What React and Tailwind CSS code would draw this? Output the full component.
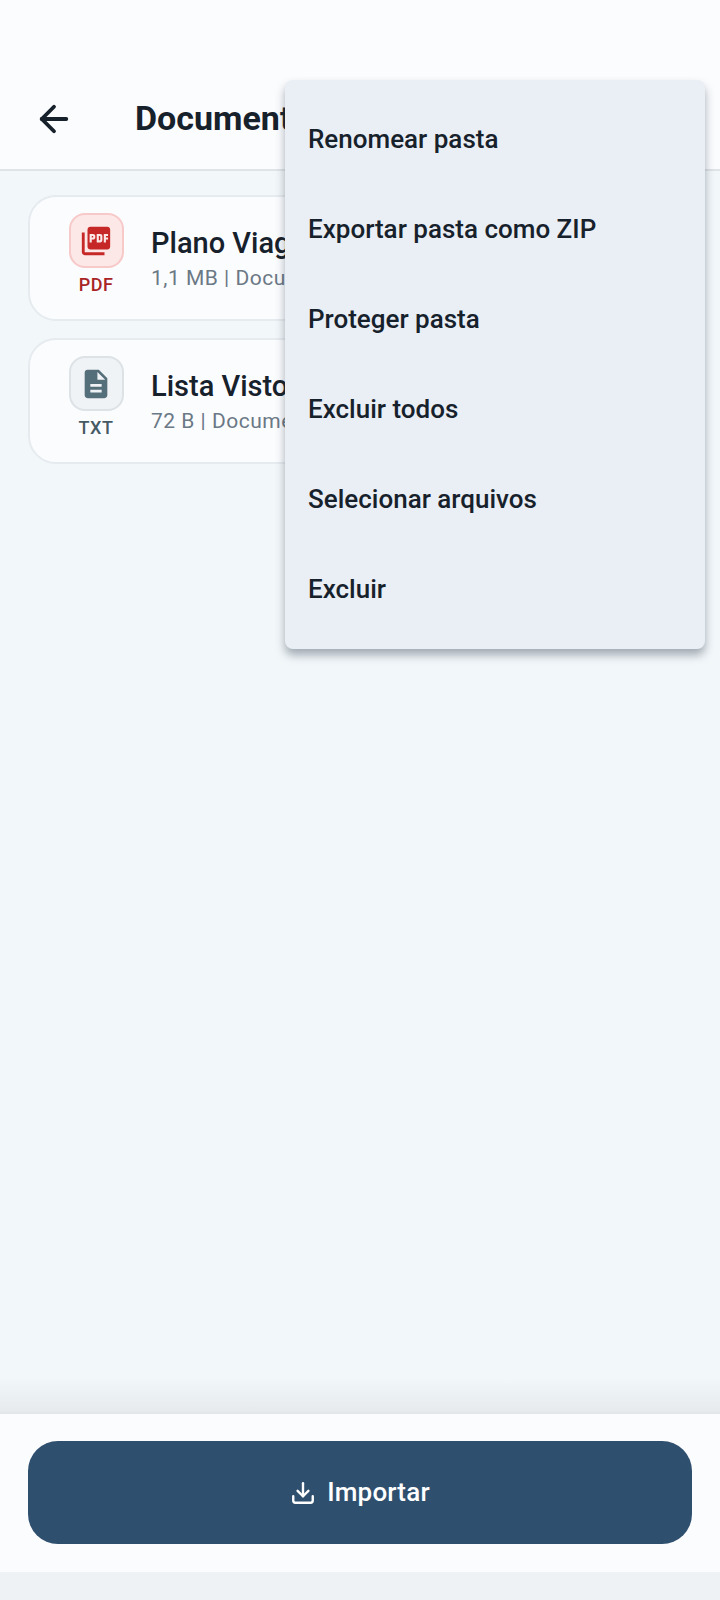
import { ArrowLeft, Download } from 'lucide-react';
import { MdPictureAsPdf, MdDescription } from 'react-icons/md';

const menuItems = [
  'Renomear pasta',
  'Exportar pasta como ZIP',
  'Proteger pasta',
  'Excluir todos',
  'Selecionar arquivos',
  'Excluir',
];

const files = [
  {
    name: 'Plano Viagem.pdf',
    meta: '1,1 MB | Documentos',
    label: 'PDF',
    Icon: MdPictureAsPdf,
    boxClass: 'bg-[#fde8e8] border-[#f8c9c9]',
    iconClass: 'text-[#c62828]',
    labelClass: 'text-[#a82424]',
  },
  {
    name: 'Lista Vistos.txt',
    meta: '72 B | Documentos',
    label: 'TXT',
    Icon: MdDescription,
    boxClass: 'bg-[#f0f3f5] border-[#dde2e6]',
    iconClass: 'text-[#546e7a]',
    labelClass: 'text-[#455a64]',
  },
];

function FileCard({ file }) {
  const { Icon } = file;
  return (
    <div className="flex h-[126px] items-start rounded-[28px] border-2 border-[#e6ebef] bg-[#fbfcfe] pl-[38px] pt-[16px]">
      <div className="flex w-[56px] flex-col items-center">
        <div className={`flex h-[55px] w-[55px] items-center justify-center rounded-[16px] border-2 ${file.boxClass}`}>
          <Icon size={34} className={file.iconClass} />
        </div>
        <span className={`mt-[5px] text-[18px] font-medium leading-[24px] tracking-[0.5px] ${file.labelClass}`}>
          {file.label}
        </span>
      </div>
      <div className="ml-[27px] pt-[11px]">
        <div className="text-[29px] font-medium leading-[38px] text-[#17212b]">{file.name}</div>
        <div className="mt-[2px] text-[21px] leading-[28px] tracking-[0.5px] text-[#6b7885]">{file.meta}</div>
      </div>
    </div>
  );
}

export default function App() {
  return (
    <div className="relative flex h-[1600px] w-[720px] flex-col overflow-hidden bg-[#f2f7fa] font-['Roboto',sans-serif]">
      <header className="flex h-[171px] shrink-0 items-end border-b-2 border-[#dfe4e8] bg-[#fbfcfe] pb-[29px] pl-[33px]">
        <ArrowLeft size={42} strokeWidth={2.2} className="text-[#17212b]" />
        <h1 className="ml-[60px] text-[34px] font-bold leading-[44px] text-[#17212b]">Documentos</h1>
      </header>

      <main className="flex flex-1 flex-col gap-[17px] px-[28px] pt-[24px]">
        {files.map((file) => (
          <FileCard key={file.label} file={file} />
        ))}
      </main>

      <div className="h-[34px] shrink-0 bg-gradient-to-b from-transparent to-[#e6eaed]" />
      <footer className="shrink-0 border-t-2 border-[#e2e6e9] bg-[#fbfcfe] px-[28px] pb-[28px] pt-[27px]">
        <button className="flex h-[103px] w-full items-center justify-center gap-[11px] rounded-[30px] bg-[#2f4f6e] text-[26px] font-medium tracking-[0.2px] text-white">
          <Download size={26} strokeWidth={2.2} />
          Importar
        </button>
      </footer>
      <div className="h-[28px] shrink-0 bg-[#eef2f5]" />

      <div className="absolute left-[285px] top-[80px] w-[420px] rounded-[8px] bg-[#e9eff5] pb-[15px] pt-[14px] shadow-[0_6px_10px_rgba(40,55,70,0.4)]">
        {menuItems.map((item) => (
          <div key={item} className="flex h-[90px] items-center px-[23px] text-[26px] font-medium text-[#17212b]">
            {item}
          </div>
        ))}
      </div>
    </div>
  );
}
